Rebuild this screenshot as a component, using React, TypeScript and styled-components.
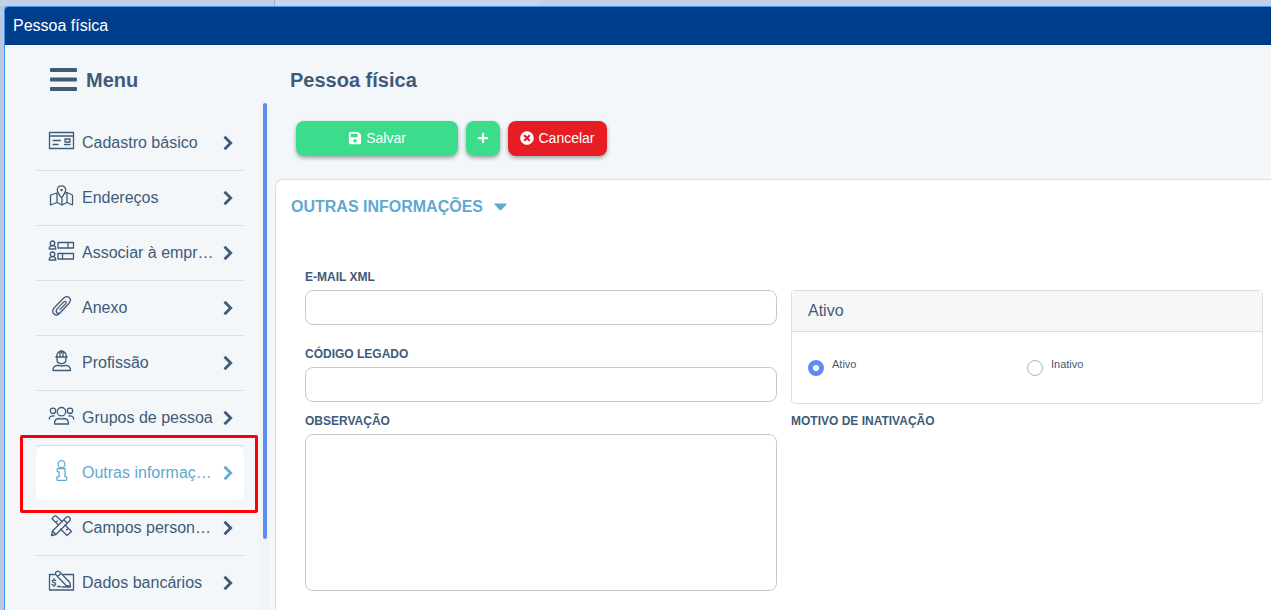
import React, { useState } from "react";
import styled, { createGlobalStyle, css } from "styled-components";
import { FaPlus, FaSave, FaTimesCircle } from "react-icons/fa";

const color = {
  text: "#3f5b78",
  accent: "#60a9d2",
  surface: "#f3f7fa",
  line: "#dbdfe4",
  header: "#003e8c",
  blue: "#5c8ef0",
  green: "#3bdc8c",
  red: "#e71c24",
};

const GlobalStyle = createGlobalStyle`
  *, *::before, *::after { box-sizing: border-box; }
  body {
    margin: 0;
    color: ${color.text};
    font-family: "Liberation Sans", Arial, sans-serif;
    font-size: 16px;
    background: #bac8df;
    overflow: hidden;
  }
`;

const Desktop = styled.div`
  display: flex;
  flex-direction: column;
  height: 100vh;
  overflow: hidden;
`;

const BackdropStrip = styled.div`
  flex: none;
  display: flex;
  height: 6px;
  background: #c3cfe6;
`;

const BackdropCell = styled.div<{ $width: number; $tint?: boolean }>`
  width: ${(p) => p.$width}px;
  background: ${(p) => (p.$tint ? "#cad3ec" : "#c3cfe6")};
  border-right: 1px solid ${(p) => (p.$tint ? "#cad3ec" : "#9faecb")};
`;

const Window = styled.div`
  flex: 1;
  min-height: 0;
  display: flex;
  flex-direction: column;
  margin-left: 4px;
  border: 1px solid #3c95f3;
  border-width: 1px 0 0 1px;
  border-top-left-radius: 4px;
  background: ${color.surface};
  overflow: hidden;
`;

const TitleBar = styled.header`
  flex: none;
  height: 38px;
  padding: 9px 8px 8px;
  background: ${color.header};
  border-bottom: 1px solid #00357c;
  color: #fff;
  line-height: 20px;
`;

const Body = styled.div`
  flex: 1;
  min-height: 0;
  display: flex;
  gap: 5px;
`;

const Sidebar = styled.aside`
  flex: none;
  width: 265px;
  display: flex;
  flex-direction: column;
`;

const MenuButton = styled.button`
  display: flex;
  align-items: center;
  gap: 9px;
  height: 58px;
  padding: 12px 0 0 45px;
  border: 0;
  background: none;
  color: inherit;
  font: bold 20px/24px "Liberation Sans", Arial, sans-serif;
`;

const MenuArea = styled.div`
  flex: 1;
  min-height: 0;
  display: flex;
`;

const MenuNav = styled.nav`
  flex: 1;
  padding: 13px 11px 0 31px;
`;

const MenuItem = styled.a<{ $active?: boolean }>`
  position: relative;
  display: flex;
  align-items: center;
  gap: 6px;
  width: 208px;
  height: 55px;
  padding: 0 11px 0 12px;
  border-bottom: 1px solid ${color.line};
  color: inherit;
  text-decoration: none;

  ${(p) =>
    p.$active &&
    css`
      color: ${color.accent};
      background: #fff;
      border-color: ${color.surface};
      border-radius: 8px;

      &::after {
        content: "";
        position: absolute;
        inset: -11px -14px -13px -16px;
        border: 3px solid #fb0007;
        border-radius: 2px;
        pointer-events: none;
      }
    `}
`;

const MenuLabel = styled.span`
  flex: 1;
  line-height: 20px;
  white-space: nowrap;
`;

const ItemIcon = styled.svg`
  flex: none;
  width: 28px;
  height: 28px;
  fill: none;
  stroke: currentColor;
  stroke-width: 1.3;
  stroke-linecap: round;
  stroke-linejoin: round;
`;

const Chevron = styled.svg`
  flex: none;
  width: 10px;
  height: 16px;
  fill: none;
  stroke: currentColor;
  stroke-width: 2.8;
`;

const ScrollTrack = styled.div`
  width: 10px;
  padding: 0 3px;
  background: #f2f3f4;
`;

const ScrollThumb = styled.div`
  height: 86%;
  border-radius: 2px;
  background: ${color.blue};
`;

const Main = styled.main`
  flex: 1;
  min-width: 0;
  display: flex;
  flex-direction: column;
`;

const PageTitle = styled.h1`
  margin: 0;
  padding: 23px 15px 29px;
  font-size: 20px;
  line-height: 24px;
`;

const Toolbar = styled.div`
  display: flex;
  gap: 8px;
  padding: 0 21px 23px;
`;

const Button = styled.button<{ $tone: "green" | "red"; $width: number }>`
  display: flex;
  align-items: center;
  justify-content: center;
  gap: 4px;
  height: 35px;
  min-width: ${(p) => p.$width}px;
  padding: 0 10px 2px;
  border: 0;
  border-radius: 8px;
  background: ${(p) => color[p.$tone]};
  box-shadow: 0 2px 4px rgba(0, 0, 0, 0.35);
  color: #fff;
  font: 14px/20px "Liberation Sans", Arial, sans-serif;
`;

const Panel = styled.section`
  flex: 1;
  padding: 17px 8px 18px 15px;
  border: 1px solid ${color.line};
  border-width: 1px 0 0 1px;
  border-top-left-radius: 8px;
  background: #fff;
`;

const PanelTitle = styled.h2`
  display: flex;
  align-items: center;
  gap: 11px;
  margin: 0 0 52px;
  color: ${color.accent};
  font-size: 16px;
  line-height: 20px;
`;

const Form = styled.form`
  display: grid;
  grid-template-columns: 1fr 1fr;
  gap: 9px 14px;
  padding-left: 14px;
`;

const FieldStack = styled.div`
  display: flex;
  flex-direction: column;
  gap: 21px;
`;

const Field = styled.div`
  display: flex;
  flex-direction: column;
  gap: 5px;
`;

const FieldLabel = styled.label`
  font-size: 12px;
  font-weight: bold;
  line-height: 16px;
`;

const controlStyle = css`
  width: 100%;
  border: 1px solid #c3c9d3;
  border-radius: 8px;
  background: #fff;
  color: inherit;
  font: 14px/20px "Liberation Sans", Arial, sans-serif;
  outline: none;
`;

const TextInput = styled.input`
  ${controlStyle}
  height: 35px;
  padding: 0 12px;
`;

const TextArea = styled.textarea`
  ${controlStyle}
  display: block;
  height: 157px;
  padding: 8px 12px;
  resize: none;
`;

const StatusCard = styled.div`
  margin-top: 21px;
  border: 1px solid ${color.line};
  border-radius: 4px;
`;

const StatusHeader = styled.div`
  padding: 10px 16px;
  border-bottom: 1px solid ${color.line};
  background: #f7f7f7;
  line-height: 20px;
`;

const StatusOptions = styled.div`
  display: grid;
  grid-template-columns: 1fr 1fr;
  padding: 24px 16px 27px;
`;

const RadioLabel = styled.label`
  display: flex;
  gap: 8px;
  font-size: 11px;
  line-height: 16px;
`;

const Radio = styled.input`
  appearance: none;
  width: 16px;
  height: 16px;
  margin: 4px 0 0;
  border: 1px solid #adb5bd;
  border-radius: 50%;
  background: #fff;

  &:checked {
    border: 5px solid ${color.blue};
  }
`;

const icons: Record<string, React.ReactNode> = {
  form: (
    <>
      <path d="M1.500 3.500h24v16h-24zM1.500 7h24" />
      <path d="M5 11.500h7.500M5 15.500h5M16.500 15.500h5.500M17 10h5v3h-5z" />
    </>
  ),
  map: (
    <>
      <path d="M13.500 14c-2-3-4.200-5.300-4.200-8a4.200 4.200 0 0 1 8.400 0c0 2.700-2.200 5-4.200 8z" />
      <circle cx="13.500" cy="6" r=".6" />
      <path d="M9 9l-6.500 2v10l6.500-2.500 5 2.500 5-2.500 5.500 2.500v-10l-5.500-2.500-2 .7M9 9v9.500M14 14.500v6.500M19 8.500v10" />
    </>
  ),
  link: (
    <>
      <circle cx="4.500" cy="4.300" r="2.300" />
      <path d="M1.200 10c0-2 1-3.300 3.300-3.300s3.300 1.300 3.300 3.300zM10 3.500h15.500v5.500H10zM20 3.500v5.500" />
      <circle cx="4.500" cy="15.300" r="2.300" />
      <path d="M1.200 21c0-2 1-3.300 3.300-3.300s3.300 1.300 3.300 3.300zM10 14.500h15.500v5.500H10zM14.500 14.500v5.500" />
    </>
  ),
  clip: (
    <path d="M20.800 9.500L12 19c-4.200 4.500-10-.3-6-5l9.500-9.800c4-4.200 9.300.6 5.300 5.300M20.800 9.500l-8 8.600c-2.800 3-6.300-.2-3.600-3.200l6.600-7M15.800 7.900c1.400-1.400 3.200.2 1.900 1.700l-5.700 6" />
  ),
  worker: (
    <>
      <path d="M8.500 8a5 6 0 0 1 10 0zM12 8V3M15 8V3M13.500 1.700V4M7.800 8h11.400" />
      <path d="M9 8v2.500c0 5.500 9 5.500 9 0V8M5 21.500h17.500c0-4-2-5.200-5-5.200l-3.800.7-3.700-.7c-3 0-5 1.200-5 5.200z" />
    </>
  ),
  group: (
    <>
      <circle cx="13.500" cy="7.700" r="4.200" />
      <path d="M6.500 20h14c0-4-1.500-5.500-4.500-5.500l-2.500.6-2.500-.6c-3 0-4.500 1.500-4.500 5.500z" />
      <circle cx="5" cy="6.800" r="2.700" />
      <circle cx="22" cy="6.800" r="2.700" />
      <path d="M1.300 15c0-2.500 1.700-3.300 4.700-3M25.700 15c0-2.500-1.700-3.300-4.700-3" />
    </>
  ),
  info: (
    <>
      <circle cx="13.500" cy="5.200" r="3.500" />
      <path d="M10.200 9.500h6.800v8.300h1q.7 0 .7.700v2q0 .8-.8.800h-8.200q-.8 0-.8-.8v-2q0-.7.700-.7h1.500v-5h-1q-.9 0-.9-.8v-1.600q0-.9 1-.9z" />
    </>
  ),
  tools: (
    <>
      <path d="M3.500 21.500l1-4.500 13.500-13.500c1-1.200 2.500-1 3.500 0s1.100 2.200 0 3.500l-13.500 13.500zM15.800 5.700l3.500 3.500M4.500 17l3.500 3.500" />
      <path d="M10.500 11L4.200 5c.3-1.500 2-3.200 3.800-3l6 5.500M17 11l6.500 6.500-4.500 4L12.500 15M8 8.500l1.500-1.500M18.500 16l1.500-1.500" />
    </>
  ),
  check: (
    <>
      <path d="M6.500 5.500H1.500v15.500h24V5.500H15.500" />
      <path d="M8.300 6.200c-1.200-1.300-1-2.600 0-3.400s2.200-1 3.400.2l10 10.200.9 4.300-4.500-1zM9.500 7.500l3.500-3.300M12.500 17.500h-3M14 18h8" />
      <path d="M7.700 11.500c-1-1.200-3.500-.8-3.500.7s3.500 1 3.500 2.700-2.700 1.700-3.700.5M5.900 9.700v1.300M5.900 16.200v1.300" />
    </>
  ),
};

const items = [
  { icon: "form", label: "Cadastro básico" },
  { icon: "map", label: "Endereços" },
  { icon: "link", label: "Associar à empr…" },
  { icon: "clip", label: "Anexo" },
  { icon: "worker", label: "Profissão" },
  { icon: "group", label: "Grupos de pessoa" },
  { icon: "info", label: "Outras informaç…" },
  { icon: "tools", label: "Campos person…" },
  { icon: "check", label: "Dados bancários" },
];

export default function App() {
  const [status, setStatus] = useState("ativo");

  return (
    <Desktop>
      <GlobalStyle />
      <BackdropStrip>
        <BackdropCell $width={275} />
        <BackdropCell $width={265} $tint />
      </BackdropStrip>
      <Window>
        <TitleBar>Pessoa física</TitleBar>
        <Body>
          <Sidebar>
            <MenuButton type="button">
              <svg width="27" height="24" viewBox="0 0 27 24" fill="currentColor" aria-hidden="true">
                <rect width="27" height="4" rx="1" />
                <rect y="9.500" width="27" height="4" rx="1" />
                <rect y="19" width="27" height="4" rx="1" />
              </svg>
              Menu
            </MenuButton>
            <MenuArea>
              <MenuNav>
                {items.map((item) => (
                  <MenuItem key={item.icon} href="#" $active={item.icon === "info"}>
                    <ItemIcon viewBox="0 0 28 28" aria-hidden="true">
                      {icons[item.icon]}
                    </ItemIcon>
                    <MenuLabel>{item.label}</MenuLabel>
                    <Chevron viewBox="0 0 10 16" aria-hidden="true">
                      <path d="M1.500 1.800L7.700 8l-6.200 6.200" />
                    </Chevron>
                  </MenuItem>
                ))}
              </MenuNav>
              <ScrollTrack>
                <ScrollThumb />
              </ScrollTrack>
            </MenuArea>
          </Sidebar>
          <Main>
            <PageTitle>Pessoa física</PageTitle>
            <Toolbar>
              <Button type="button" $tone="green" $width={162}>
                <FaSave />
                Salvar
              </Button>
              <Button type="button" $tone="green" $width={34} aria-label="Adicionar">
                <FaPlus size={12} />
              </Button>
              <Button type="button" $tone="red" $width={99}>
                <FaTimesCircle />
                Cancelar
              </Button>
            </Toolbar>
            <Panel>
              <PanelTitle>
                OUTRAS INFORMAÇÕES
                <svg width="13" height="8" viewBox="0 0 13 8" aria-hidden="true">
                  <path
                    d="M1 .5h11q1 .2.4 1L7.300 7q-.8.800-1.600 0L.6 1.500Q0 .7 1 .5z"
                    fill="currentColor"
                  />
                </svg>
              </PanelTitle>
              <Form>
                <FieldStack>
                  <Field>
                    <FieldLabel htmlFor="email">E-MAIL XML</FieldLabel>
                    <TextInput id="email" type="email" />
                  </Field>
                  <Field>
                    <FieldLabel htmlFor="codigo">CÓDIGO LEGADO</FieldLabel>
                    <TextInput id="codigo" />
                  </Field>
                </FieldStack>
                <StatusCard role="radiogroup" aria-labelledby="status-title">
                  <StatusHeader id="status-title">Ativo</StatusHeader>
                  <StatusOptions>
                    <RadioLabel>
                      <Radio
                        type="radio"
                        name="status"
                        checked={status === "ativo"}
                        onChange={() => setStatus("ativo")}
                      />
                      Ativo
                    </RadioLabel>
                    <RadioLabel>
                      <Radio
                        type="radio"
                        name="status"
                        checked={status === "inativo"}
                        onChange={() => setStatus("inativo")}
                      />
                      Inativo
                    </RadioLabel>
                  </StatusOptions>
                </StatusCard>
                <Field>
                  <FieldLabel htmlFor="observacao">OBSERVAÇÃO</FieldLabel>
                  <TextArea id="observacao" />
                </Field>
                <Field>
                  <FieldLabel as="span">MOTIVO DE INATIVAÇÃO</FieldLabel>
                </Field>
              </Form>
            </Panel>
          </Main>
        </Body>
      </Window>
    </Desktop>
  );
}
